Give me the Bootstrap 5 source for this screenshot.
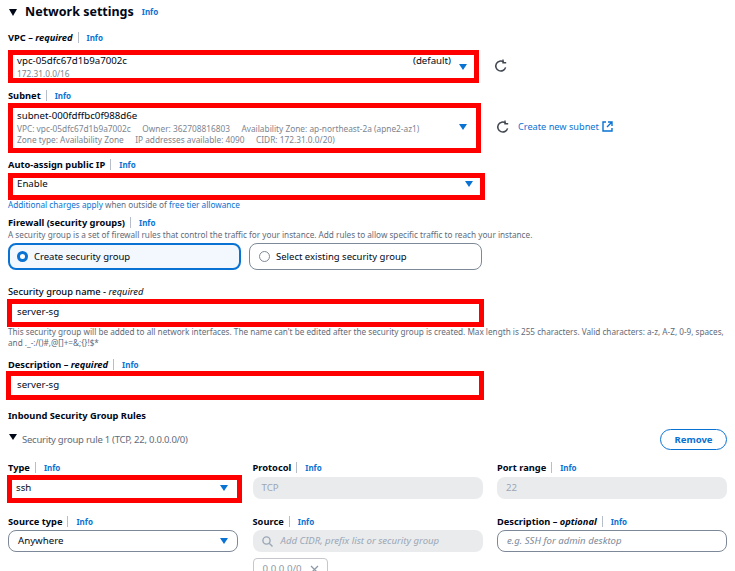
<!DOCTYPE html>
<html lang="en"><head><meta charset="utf-8"><title>Network settings</title>
<link href="https://cdn.jsdelivr.net/npm/bootstrap@5.3.0/dist/css/bootstrap.min.css" rel="stylesheet">
<style>
html,body{height:571px;overflow:hidden;background:#fff}
body{font-family:"Noto Sans","Open Sans",sans-serif;color:#000716;font-size:10px;line-height:14px}
.sheet{padding:0 8px;width:735px}
.net-head{height:22px;padding-top:2px;font-size:12.5px;font-weight:700}
.tri{width:0;height:0;border-left:4.5px solid transparent;border-right:4.5px solid transparent;border-top:7px solid #000716;flex:none;margin:0 8px 0 1px}
.fld-label{height:14px;font-size:9.3px;line-height:16px;font-weight:700;white-space:nowrap}
.fld-label.lbl-low{line-height:18px}
.fld-label em{font-weight:700}
.fld-label.plain{font-weight:500}
.info{color:#0972d3;font-size:8px;font-weight:700;text-decoration:none;border-left:1px solid #b6bec9;padding-left:8px;margin-left:5px;line-height:12px}
.net-head .info{border:0;padding:0;margin-left:8px;font-size:8px}
.redbox{border:5px solid #f00;background:#fff}
.val{font-size:9.7px;line-height:14px;color:#000716}
.sub{font-size:8.3px;line-height:11px;color:#7d8590;white-space:nowrap}
.sub-gap{gap:11.5px}
.caret-b{width:0;height:0;border-left:4.5px solid transparent;border-right:4.5px solid transparent;border-top:6px solid #0972d3;flex:none}
.r-vpc{width:471px;height:33px;padding:0 7px 0 4px}
.r-sub{width:473px;height:50px;padding:0 9px 2px 4px}
.r-auto{width:477px;height:27px;padding:0 7px 5px 4px}
.r-name{width:477px;height:28px;margin-left:-1px;padding:0 0 2px 5px}
.r-desc{width:478px;height:29px;margin-left:-2px;padding:0 0 2px 6px}
.ref{width:14px;height:14px;margin-left:15px;margin-top:-1px;flex:none}
.ref-up{margin-top:-3px}
.ext-link{color:#0972d3;font-size:9.2px;text-decoration:none;margin-left:8px;margin-top:-3px;white-space:nowrap}
.ext-ico{margin-left:3px}
.hint{font-size:8.2px;line-height:10px;color:#5f6b7a}
.hint a{color:#0972d3;text-decoration:none}
.hint-b{line-height:11px;width:722px;white-space:normal}
.tile{height:27px;width:233px;border-radius:8px;border:1px solid #7d8998;padding-left:9px;font-size:9.5px;gap:6px}
.tile.on{border:2px solid #0972d3;background:#f2f8fd;padding-left:7px}
.dot{width:11px;height:11px;border-radius:50%;border:1px solid #7d8998;flex:none;background:#fff}
.dot.on{border:3.5px solid #0972d3}
.rm{height:21px;width:67px;border:1.5px solid #0972d3;border-radius:20px;color:#0972d3;font-size:9.5px;font-weight:700;background:#fff;padding:0;line-height:18px}
.rule-title{font-size:9.5px;color:#5f6b7a;letter-spacing:-.25px}
.tri-sm{border-left-width:4px;border-right-width:4px;border-top-width:6px;margin:-6px 5px 0 1px}
.triple{--bs-gutter-x:14.5px;--bs-gutter-y:0}
.ctl{height:22px;border-radius:8px;padding:0 9px;display:flex;align-items:center;font-size:9.7px}
.ctl.off{background:#e9ebed;color:#9ba7b6}
.ctl.open{border:1px solid #7d8998;background:#fff}
.ctl i{color:#9ba7b6;font-size:9.6px;white-space:nowrap}
.ctl.open i{color:#7d8998}
.r-type{height:28px;margin:-2px -4px -4px -1px;padding:0 9px 2px 4px}
.chip{width:75px;height:22px;border:1px solid #c6c6cd;border-radius:4px;padding-left:9px;color:#8d99a8;font-size:9.7px}
.gap6{margin-top:6px}.gap5{margin-top:5px}.gap4{margin-top:4px}.gap2{margin-top:2px}.gap1{margin-top:1px}
.gap3{margin-top:3px}.gap7{margin-top:7px}.gap8{margin-top:8px}.gap9{margin-top:9px}.gap13{margin-top:13px}.gap14{margin-top:14px}.up1{margin-top:-1px}
</style></head>
<body>
<div class="sheet">
  <div class="net-head d-flex align-items-center">
    <span class="tri"></span><span>Network settings</span><a class="info" href="#">Info</a>
  </div>
  <div class="fld-label gap8">VPC – <em>required</em><a class="info" href="#">Info</a></div>
  <div class="d-flex align-items-center gap6">
    <div class="redbox r-vpc d-flex align-items-center">
      <div class="flex-grow-1">
        <div class="val d-flex justify-content-between"><span>vpc-05dfc67d1b9a7002c</span><span>(default)</span></div>
        <div class="sub">172.31.0.0/16</div>
      </div>
      <span class="caret-b ms-2"></span>
    </div>
    <svg class="ref" viewBox="0 0 14 14" fill="none" stroke="#414750" stroke-width="1.5"><path d="M11.6 8.4A5 5 0 1 1 9.6 2.9"/><path d="M9 .6v3.2h3.2" stroke-width="1.4"/></svg>
  </div>
  <div class="fld-label gap5">Subnet<a class="info" href="#">Info</a></div>
  <div class="d-flex align-items-center gap1">
    <div class="redbox r-sub d-flex align-items-center">
      <div class="flex-grow-1">
        <div class="val">subnet-000fdffbc0f988d6e</div>
        <div class="sub d-flex sub-gap"><span>VPC: vpc-05dfc67d1b9a7002c</span><span>Owner: 362708816803</span><span>Availability Zone: ap-northeast-2a (apne2-az1)</span></div>
        <div class="sub d-flex sub-gap"><span>Zone type: Availability Zone</span><span>IP addresses available: 4090</span><span>CIDR: 172.31.0.0/20)</span></div>
      </div>
      <span class="caret-b ms-2"></span>
    </div>
    <svg class="ref ref-up" viewBox="0 0 14 14" fill="none" stroke="#414750" stroke-width="1.5"><path d="M11.6 8.4A5 5 0 1 1 9.6 2.9"/><path d="M9 .6v3.2h3.2" stroke-width="1.4"/></svg>
    <a class="ext-link d-flex align-items-center" href="#">Create new subnet
      <svg class="ext-ico" width="11" height="11" viewBox="0 0 11 11" fill="none" stroke="#0972d3" stroke-width="1.4"><path d="M4 1H1v9h9V7"/><path d="M6 1h4v4M10 1 5 6"/></svg>
    </a>
  </div>
  <div class="fld-label gap4">Auto-assign public IP<a class="info" href="#">Info</a></div>
  <div class="redbox r-auto d-flex align-items-center justify-content-between gap2">
    <span class="val">Enable</span><span class="caret-b"></span>
  </div>
  <div class="hint lh-1 gap1"><a href="#">Additional charges apply</a> when outside of <a href="#">free tier allowance</a></div>
  <div class="fld-label lbl-low gap5">Firewall (security groups)<a class="info" href="#">Info</a></div>
  <div class="hint gap2">A security group is a set of firewall rules that control the traffic for your instance. Add rules to allow specific traffic to reach your instance.</div>
  <div class="d-flex gap-2 gap3">
    <div class="tile on d-flex align-items-center"><span class="dot on"></span><span>Create security group</span></div>
    <div class="tile d-flex align-items-center"><span class="dot"></span><span>Select existing security group</span></div>
  </div>
  <div class="fld-label lbl-low plain gap13">Security group name - <em class="fw-normal">required</em></div>
  <div class="redbox r-name d-flex align-items-center gap2"><span class="val">server-sg</span></div>
  <div class="hint hint-b up1">This security group will be added to all network interfaces. The name can't be edited after the security group is created. Max length is 255 characters. Valid characters: a-z, A-Z, 0-9, spaces, and ._-:/()#,@[]+=&amp;;{}!$*</div>
  <div class="fld-label lbl-low gap8">Description – <em>required</em><a class="info" href="#">Info</a></div>
  <div class="redbox r-desc d-flex align-items-center gap1"><span class="val">server-sg</span></div>
  <div class="fld-label lbl-low gap7">Inbound Security Group Rules</div>
  <div class="d-flex align-items-center justify-content-between gap8">
    <div class="d-flex align-items-center"><span class="tri tri-sm"></span><span class="rule-title">Security group rule 1 (TCP, 22, 0.0.0.0/0)</span></div>
    <button class="rm" type="button">Remove</button>
  </div>
  <div class="row triple gap9">
    <div class="col-4">
      <div class="fld-label lbl-low">Type<a class="info" href="#">Info</a></div>
      <div class="gap4"><div class="redbox r-type d-flex align-items-center justify-content-between"><span class="val">ssh</span><span class="caret-b"></span></div></div>
    </div>
    <div class="col-4">
      <div class="fld-label lbl-low">Protocol<a class="info" href="#">Info</a></div>
      <div class="ctl off gap4">TCP</div>
    </div>
    <div class="col-4">
      <div class="fld-label lbl-low">Port range<a class="info" href="#">Info</a></div>
      <div class="ctl off gap4">22</div>
    </div>
  </div>
  <div class="row triple gap14">
    <div class="col-4">
      <div class="fld-label lbl-low">Source type<a class="info" href="#">Info</a></div>
      <div class="ctl open justify-content-between gap3"><span>Anywhere</span><span class="caret-b"></span></div>
    </div>
    <div class="col-4">
      <div class="fld-label lbl-low">Source<a class="info" href="#">Info</a></div>
      <div class="ctl off gap3">
        <svg class="me-2 flex-shrink-0" width="11" height="11" viewBox="0 0 11 11" fill="none" stroke="#9ba7b6" stroke-width="1.4"><circle cx="4.5" cy="4.5" r="3.6"/><path d="M7.2 7.2 10.5 10.5"/></svg>
        <i>Add CIDR, prefix list or security group</i>
      </div>
      <div class="chip d-flex align-items-center gap6">0.0.0.0/0
        <svg class="ms-2" width="9" height="9" viewBox="0 0 9 9" fill="none" stroke="#8d99a8" stroke-width="1.3"><path d="M1 1l7 7M8 1 1 8"/></svg>
      </div>
    </div>
    <div class="col-4">
      <div class="fld-label lbl-low">Description – <em>optional</em><a class="info" href="#">Info</a></div>
      <div class="ctl open gap3"><i>e.g. SSH for admin desktop</i></div>
    </div>
  </div>
</div>
<script src="https://cdn.jsdelivr.net/npm/bootstrap@5.3.0/dist/js/bootstrap.bundle.min.js"></script>
</body></html>
